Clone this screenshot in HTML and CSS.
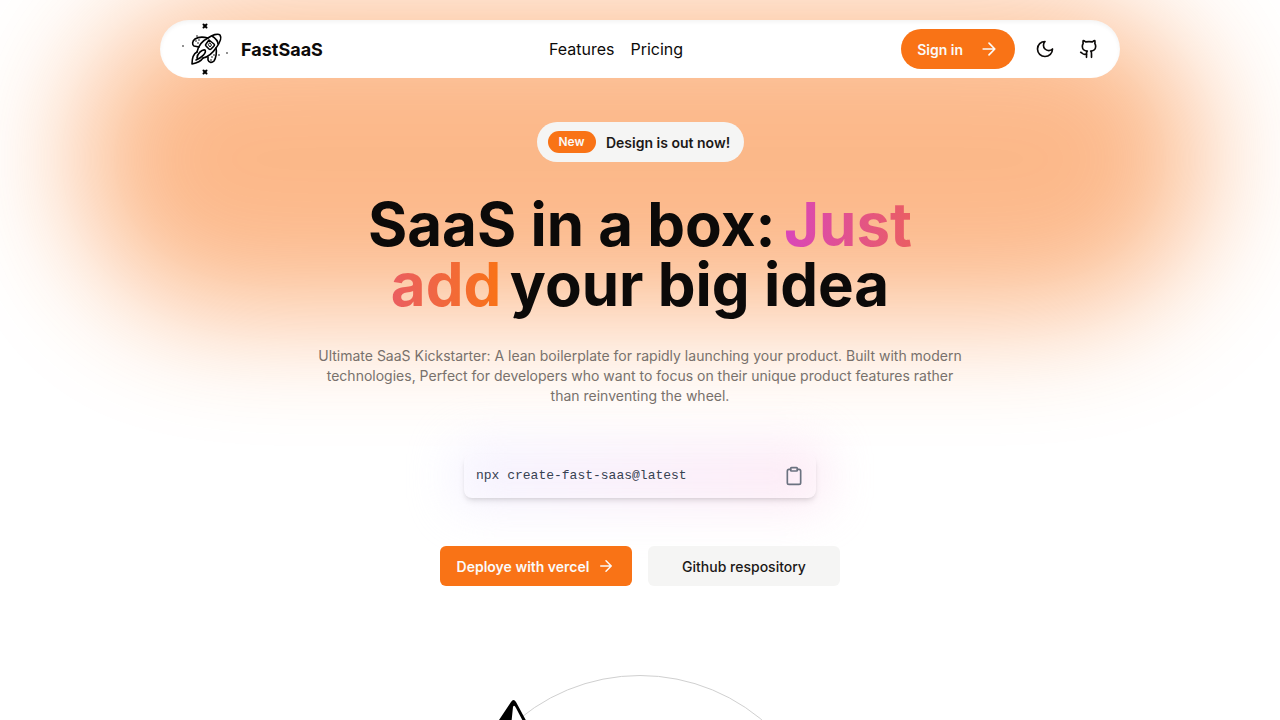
FILE: index.html
```html
<!DOCTYPE html>
<html lang="en">
<head>
  <meta charset="UTF-8">
  <meta name="viewport" content="width=device-width, initial-scale=1">
  <title>FastSaaS</title>
  <link rel="stylesheet" href="styles.css">
</head>
<body>
  <div class="glow"></div>

  <header class="navbar">
    <a class="brand" href="#">
      <svg class="logo" viewBox="0 0 50 56" fill="none" stroke="#000" stroke-width="1.6" stroke-linecap="round" stroke-linejoin="round">
        <path d="M17 31C18 26 22 20 28 17C32 14 38 12 40 14C42 17 39 23 36 27C32 33 28 36 23 37"/>
        <path d="M32 15C35 17 38 20 38 23"/>
        <path d="M29 19L34 23Q35 24 34 25L31 28Q30 29 29 28L26 25Q25 24 26 23Z"/>
        <path d="M30 22L31.500 24L30 26L28.500 24Z" stroke-width="1"/>
        <path d="M28 17C24 16 18 16 15 18C12 20 12 24 14 25L19 26"/>
        <path d="M36 27C37 31 36 37 34 40C32 42 29 42 28 39L28 36"/>
        <path d="M17 31C13 33 12 37 12 43C17 42 21 40 23 37"/>
        <path d="M17 37C17 33 22 28 25 29C27 32 21 37 16 39"/>
        <path d="M16 20V20M18 22V22M19 19V19M32 36V36M31 39V39M34 34V34M3 25V25M17 15V15M39 34V34M47 32V32"/>
        <path d="M23.500 3.500L26.500 6.500M26.500 3.500L23.500 6.500M23.500 49.500L26.500 52.500M26.500 49.500L23.500 52.500" stroke-width="2"/>
      </svg>
      <span>FastSaaS</span>
    </a>
    <nav class="nav-links">
      <a href="#features">Features</a>
      <a href="#pricing">Pricing</a>
    </nav>
    <div class="nav-actions">
      <button class="btn btn-primary btn-signin" type="button">
        Sign in
        <svg class="icon" viewBox="0 0 24 24"><path d="M5 12h14M12 5l7 7-7 7"/></svg>
      </button>
      <div class="nav-icons">
        <button class="icon-btn" type="button" aria-label="Toggle theme">
          <svg class="icon" viewBox="0 0 24 24"><path d="M12 3a6 6 0 0 0 9 9 9 9 0 1 1-9-9Z"/></svg>
        </button>
        <a class="icon-btn" href="#" aria-label="GitHub">
          <svg class="icon" viewBox="0 0 24 24"><path d="M15 22v-4a4.800 4.800 0 0 0-1-3.500c3 0 6-2 6-5.500.080-1.250-.270-2.480-1-3.500.280-1.150.280-2.350 0-3.500 0 0-1 0-3 1.500-2.640-.500-5.360-.500-8 0C6 2 5 2 5 2c-.300 1.150-.300 2.350 0 3.500A5.403 5.403 0 0 0 4 9c0 3.500 3 5.500 6 5.500-.390.490-.680 1.050-.850 1.650-.170.600-.220 1.230-.150 1.850v4"/><path d="M9 18c-4.510 2-5-2-7-2"/></svg>
        </a>
      </div>
    </div>
  </header>

  <main class="hero">
    <div class="announce">
      <span class="tag">New</span>
      <span class="announce-text">Design is out now!</span>
    </div>

    <h1>
      <span>SaaS in a box:</span>
      <span class="highlight">Just add</span>
      <span>your big idea</span>
    </h1>

    <p class="lead">Ultimate SaaS Kickstarter: A lean boilerplate for rapidly launching your product. Built with modern technologies, Perfect for developers who want to focus on their unique product features rather than reinventing the wheel.</p>

    <div class="command">
      <code>npx create-fast-saas@latest</code>
      <button class="copy-btn" type="button" aria-label="Copy command">
        <svg class="icon" viewBox="0 0 24 24"><rect x="8" y="2" width="8" height="4" rx="1"/><path d="M16 4h2a2 2 0 0 1 2 2v14a2 2 0 0 1-2 2H6a2 2 0 0 1-2-2V6a2 2 0 0 1 2-2h2"/></svg>
      </button>
    </div>

    <div class="cta">
      <button class="btn btn-primary" type="button">
        Deploye with vercel
        <svg class="icon icon-sm" viewBox="0 0 24 24"><path d="M5 12h14M12 5l7 7-7 7"/></svg>
      </button>
      <a class="btn btn-secondary" href="#">Github respository</a>
    </div>
  </main>

  <section class="orbit-section">
    <div class="orbit">
      <svg class="orbit-logo" viewBox="0 0 60 60">
        <path d="M27 2Q29.500-2 32 2L58 50Q59 53 56 54L28 60Q24 61 22 58L3 43Q1 41 3 38Z" fill="#000"/>
        <path d="M29 7Q30 4 32 8L53 48L24 55Z" fill="#fff"/>
      </svg>
    </div>
  </section>
</body>
</html>
```
FILE: styles.css
```css
* {
  box-sizing: border-box;
}

body {
  position: relative;
  margin: 0;
  padding-top: 20px;
  background-color: #fff;
  color: #0c0a09;
  font-family: Inter, sans-serif;
  overflow-x: hidden;
}

a {
  color: inherit;
  text-decoration: none;
}

.glow {
  position: absolute;
  z-index: -1;
  top: 4px;
  left: 6%;
  right: 6%;
  height: 310px;
  border-radius: 155px;
  background-color: #f97316;
  opacity: 0.5;
  filter: blur(60px);
}

.icon {
  width: 20px;
  height: 20px;
  flex: none;
  fill: none;
  stroke: currentColor;
  stroke-width: 2;
  stroke-linecap: round;
  stroke-linejoin: round;
}

.icon-sm {
  width: 18px;
  height: 18px;
}

/* navbar */
.navbar {
  display: flex;
  align-items: center;
  justify-content: space-between;
  width: 75%;
  height: 58px;
  margin: 0 auto;
  padding: 0 11px 0 20px;
  border-radius: 29px;
  background-color: #fff;
  box-shadow: inset 0 2px 4px rgba(0, 0, 0, 0.05);
}

.brand {
  display: flex;
  align-items: center;
  gap: 11px;
  padding-right: 8px;
  font-size: 18px;
  font-weight: 700;
}

.logo {
  width: 50px;
  height: 56px;
}

.nav-links {
  display: flex;
  gap: 16px;
  font-size: 16px;
}

.nav-actions {
  display: flex;
  align-items: center;
  gap: 10px;
}

.nav-icons {
  display: flex;
  gap: 4px;
}

.icon-btn {
  display: flex;
  align-items: center;
  justify-content: center;
  width: 40px;
  height: 40px;
  padding: 0;
  border: 0;
  background: none;
  color: inherit;
}

.btn {
  display: flex;
  align-items: center;
  justify-content: center;
  gap: 8px;
  height: 40px;
  padding: 0 16px;
  border: 0;
  border-radius: 6px;
  font-family: inherit;
  font-size: 14px;
  font-weight: 500;
  white-space: nowrap;
  cursor: pointer;
}

.btn-primary {
  background-color: #f97316;
  color: #fafaf9;
  font-weight: 600;
}

.btn-secondary {
  background-color: #f5f5f4;
  color: #1c1917;
}

.btn-signin {
  gap: 16px;
  border-radius: 20px;
}

/* hero */
.hero {
  display: flex;
  flex-direction: column;
  align-items: center;
  padding: 44px 16px 0;
}

.announce {
  display: flex;
  align-items: center;
  gap: 8px;
  min-width: 207px;
  height: 40px;
  padding: 0 11px;
  border-radius: 20px;
  background-color: #f5f5f4;
  color: #1c1917;
  font-size: 14px;
  font-weight: 600;
}

.announce-text {
  flex: 1;
  text-align: center;
}

.tag {
  padding: 3px 11px;
  border-radius: 11px;
  background-color: #f97316;
  color: #fafaf9;
  font-size: 12px;
  line-height: 16px;
}

/* the small size here only sets the gaps between the spans */
h1 {
  max-width: 640px;
  margin: 32px 0 0;
  font-size: 36px;
  font-weight: 700;
  line-height: 40px;
  text-align: center;
}

h1 span {
  font-size: 60px;
  line-height: 60px;
}

.highlight {
  background-image: linear-gradient(to right, #d946ba, #f97316);
  background-clip: text;
  -webkit-background-clip: text;
  color: transparent;
}

.lead {
  max-width: 648px;
  margin: 32px 0 0;
  color: #78716c;
  font-size: 14px;
  line-height: 20px;
  text-align: center;
}

.command {
  position: relative;
  display: flex;
  align-items: center;
  justify-content: space-between;
  width: 352px;
  height: 44px;
  margin-top: 48px;
  padding: 0 12px;
  border-radius: 8px;
  box-shadow: 0 4px 6px -1px rgba(0, 0, 0, 0.1), 0 2px 4px -2px rgba(0, 0, 0, 0.1);
}

/* soft violet to pink light behind the command */
.command::before {
  content: "";
  position: absolute;
  z-index: -1;
  inset: -10px;
  border-radius: 8px;
  background-image: linear-gradient(to right, #e9e4ff, #fbcfe8);
  opacity: 0.45;
  filter: blur(24px);
}

.command code {
  color: #374151;
  font-family: "Liberation Mono", monospace;
  font-size: 13px;
  line-height: 20px;
}

.copy-btn {
  display: flex;
  padding: 0;
  border: 0;
  background: none;
  color: #6b7280;
  cursor: pointer;
}

.cta {
  display: flex;
  gap: 16px;
  margin-top: 48px;
}

.cta .btn {
  width: 192px;
}

/* orbit */
.orbit-section {
  display: flex;
  justify-content: center;
  padding: 89px 0 64px;
}

.orbit {
  position: relative;
  width: 380px;
  height: 380px;
  border: 1px solid #d0d0d0;
  border-radius: 50%;
}

.orbit-logo {
  position: absolute;
  top: 24px;
  left: 33px;
  width: 60px;
  height: 60px;
}
```
